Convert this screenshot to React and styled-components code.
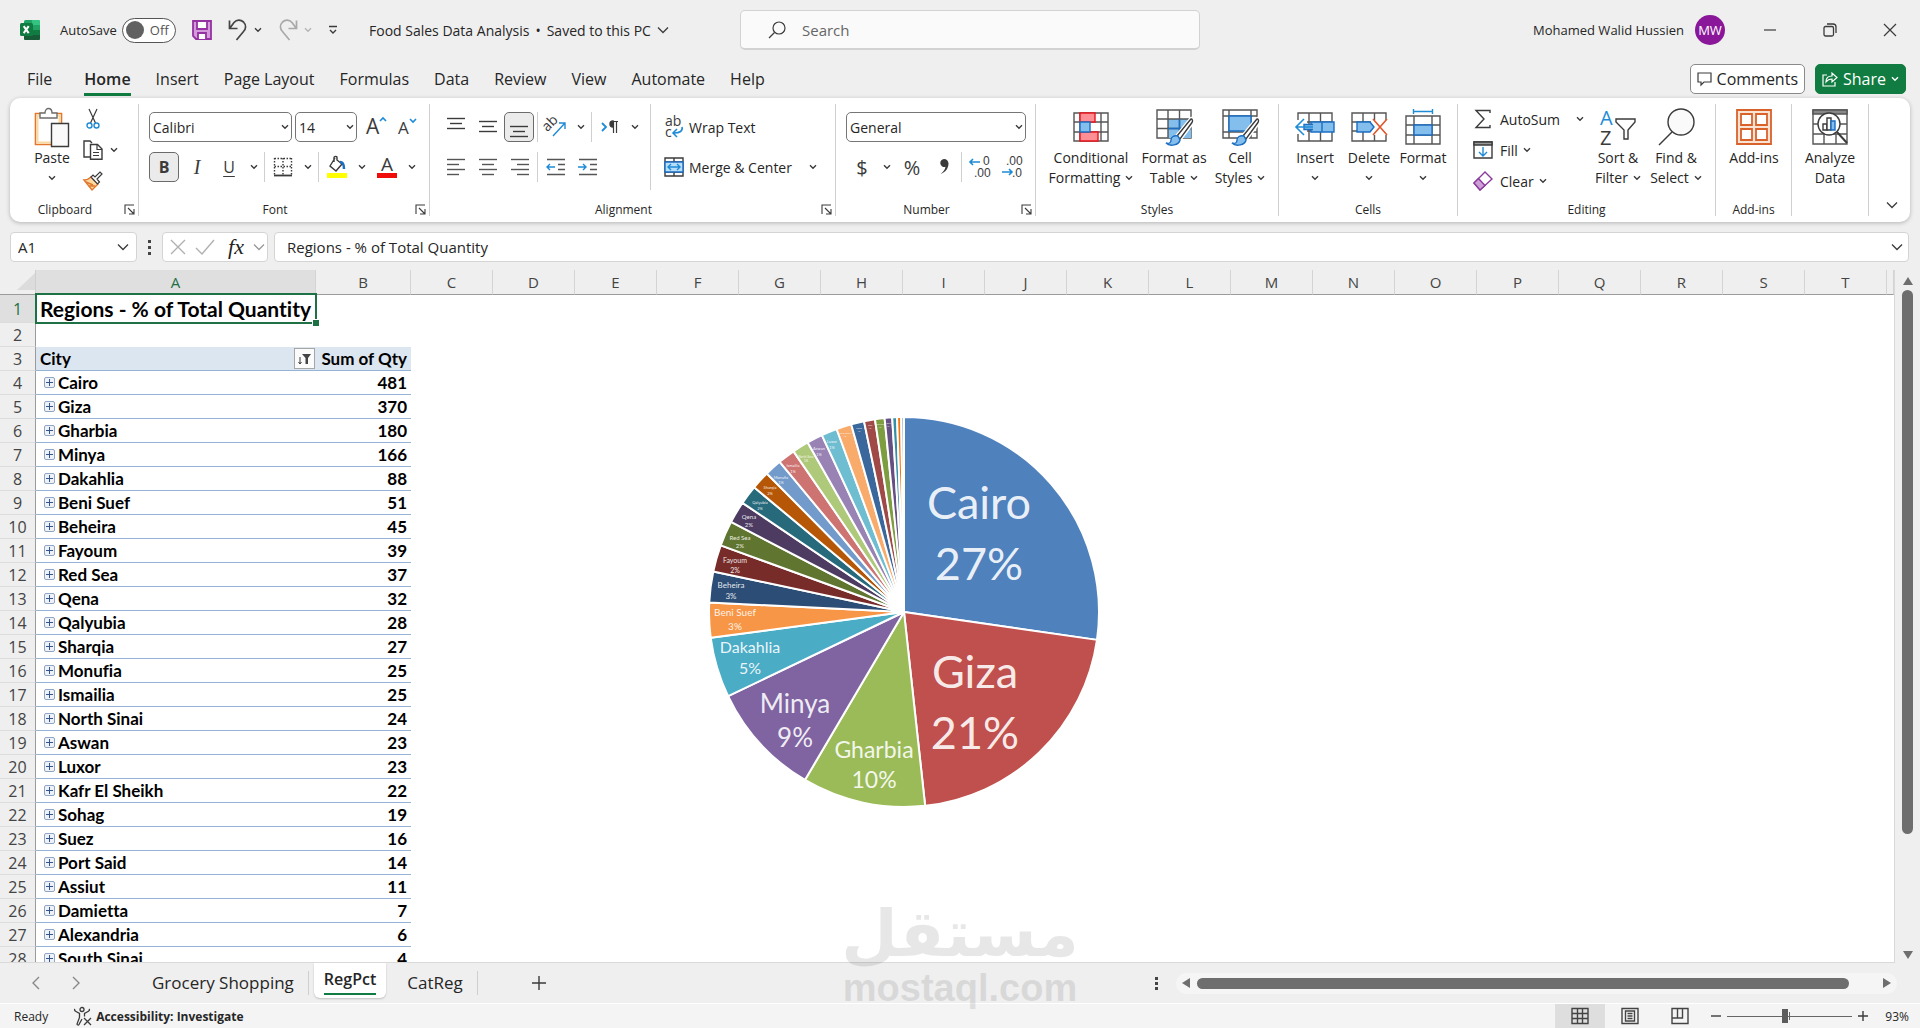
import React, { useState } from 'react'
import styled, { createGlobalStyle, css } from 'styled-components'

const cities = [
  { name: 'Cairo', qty: 481, color: '#4f81bd', label: { x: 271, y: 103, gap: 61, size: 45 } },
  { name: 'Giza', qty: 370, color: '#c0504d', label: { x: 267, y: 272, gap: 61, size: 45 } },
  { name: 'Gharbia', qty: 180, color: '#9bbb59', label: { x: 166, y: 342, gap: 30, size: 23 } },
  { name: 'Minya', qty: 166, color: '#8064a2', label: { x: 87, y: 297, gap: 34, size: 26 } },
  { name: 'Dakahlia', qty: 88, color: '#4bacc6', label: { x: 42, y: 237, gap: 21, size: 16 } },
  { name: 'Beni Suef', qty: 51, color: '#f79646', label: { x: 27, y: 200, gap: 14, size: 10 } },
  { name: 'Beheira', qty: 45, color: '#2c4d75', label: { x: 23, y: 172, gap: 11, size: 8 } },
  { name: 'Fayoum', qty: 39, color: '#772c2a', label: { x: 27, y: 147, gap: 10, size: 7 } },
  { name: 'Red Sea', qty: 37, color: '#5f7530', label: { x: 32, y: 124, gap: 8, size: 6 } },
  { name: 'Qena', qty: 32, color: '#4d3b62', label: { x: 41, y: 103, gap: 8, size: 6 } },
  { name: 'Qalyubia', qty: 28, color: '#276a7c', label: { x: 52, y: 88, gap: 6, size: 4 } },
  { name: 'Sharqia', qty: 27, color: '#b65708', label: { x: 62, y: 73, gap: 6, size: 4 } },
  { name: 'Monufia', qty: 25, color: '#729aca', label: { x: 73, y: 63, gap: 5, size: 4 } },
  { name: 'Ismailia', qty: 25, color: '#cd7371', label: { x: 85, y: 51, gap: 6, size: 4 } },
  { name: 'North Sinai', qty: 24, color: '#afc97a', label: { x: 98, y: 42, gap: 4, size: 3 } },
  { name: 'Aswan', qty: 23, color: '#9983b5', label: { x: 111, y: 34, gap: 6, size: 4 } },
  { name: 'Luxor', qty: 23, color: '#6fbdd1', label: { x: 124, y: 27, gap: 6, size: 4 } },
  { name: 'Kafr El Sheikh', qty: 22, color: '#f9ab6b', label: { x: 137, y: 18, gap: 3, size: 2 } },
  { name: 'Sohag', qty: 19, color: '#3a679c', label: { x: 151, y: 13, gap: 3, size: 2 } },
  { name: 'Suez', qty: 16, color: '#9f4a47', label: { x: 162, y: 10, gap: 3, size: 2 } },
  { name: 'Port Said', qty: 14, color: '#7e9d40', label: { x: 172, y: 9, gap: 3, size: 2 } },
  { name: 'Assiut', qty: 11, color: '#664f83', label: { x: 180, y: 8, gap: 3, size: 2 } },
  { name: 'Damietta', qty: 7, color: '#358ea6' },
  { name: 'Alexandria', qty: 6, color: '#f3730a' },
  { name: 'South Sinai', qty: 4, color: '#95b3d7' },
]

const menu = ['File', 'Home', 'Insert', 'Page Layout', 'Formulas', 'Data', 'Review', 'View', 'Automate', 'Help']
const columns = 'ABCDEFGHIJKLMNOPQRST'.split('')

/* ---------- icons ---------- */

const ink = '#3b3b3b'
const blue = '#1e8bd6'

const Svg = ({ w = 20, h = 20, children, ...rest }) => (
  <svg width={w} height={h} viewBox={`0 0 ${w} ${h}`} fill="none" stroke={ink} strokeWidth="1.4" aria-hidden="true" {...rest}>
    {children}
  </svg>
)

const Chevron = ({ color = ink }) => (
  <Svg w={8} h={6} stroke={color}><path d="M1 1.2 4 4.2 7 1.2" /></Svg>
)

const WideChevron = ({ color = ink }) => (
  <Svg w={12} h={8} stroke={color} strokeWidth="1.3"><path d="M1 1.5 6 6.5 11 1.5" /></Svg>
)

const ExcelLogo = () => (
  <Svg stroke="none">
    <rect x="4" y="0" width="16" height="20" rx="1.5" fill="#21a366" />
    <path d="M12 0h6.5a1.5 1.5 0 0 1 1.5 1.5V5h-8z" fill="#33c481" />
    <rect x="4" y="5" width="8" height="5" fill="#107c41" />
    <rect x="12" y="10" width="8" height="5" fill="#107c41" />
    <path d="M4 15h16v3.5a1.5 1.5 0 0 1-1.5 1.5h-13A1.5 1.5 0 0 1 4 18.500z" fill="#185c37" />
    <rect x="0" y="3" width="13" height="13" rx="1.5" fill="#107c41" />
    <path d="m3.700 6.200 5 7m0-7-5 7" stroke="#fff" strokeWidth="2" />
  </Svg>
)

const SaveIcon = () => (
  <Svg stroke="#9332a0" strokeWidth="1.800">
    <path d="M1 1h18v18H4l-3-3z" fill="#d49adc" />
    <path d="M5 1h10v8H5z" fill="#fff" />
    <path d="M6 19v-6h8v6" fill="#fff" />
  </Svg>
)

const UndoIcon = ({ flip, color }) => (
  <Svg w={20} h={22} stroke={color} strokeWidth="1.700">
    <g transform={flip ? 'translate(20 0) scale(-1 1)' : undefined}>
      <path d="M1.500 1.500v8h8M2 9l4-5.500C9 0 13 .8 15.500 3c3 3 2.500 7 0 9.500L8.500 21" />
    </g>
  </Svg>
)

const MagnifierIcon = () => (
  <Svg w={18} h={18} strokeWidth="1.200"><circle cx="11" cy="7" r="6" /><path d="M6.500 11.500 1 17" /></Svg>
)

const PasteIcon = () => (
  <Svg w={36} h={40}>
    <path d="M1.500 6.500h26v31h-26z" stroke="#e0772c" strokeWidth="1.600" fill="#fff" />
    <path d="M3.500 8.500h22v27h-22z" stroke="#fbd9a0" strokeWidth="2" />
    <path d="M6 11V6h5c0-6 7-6 7 0h5v5z" fill="#fff" stroke="#6e6e6e" />
    <path d="M17.500 16.500h17v23h-17z" fill="#fafafa" />
  </Svg>
)

const CutIcon = () => (
  <Svg w={14} h={20}>
    <path d="M3 0 9.500 14M11 0 4.500 14" strokeWidth="1.200" />
    <circle cx="3.500" cy="16.500" r="2.500" stroke={blue} />
    <circle cx="10.500" cy="16.500" r="2.500" stroke={blue} />
  </Svg>
)

const CopyIcon = () => (
  <Svg>
    <path d="M7 17H1V1h6l2 2" /><path d="M7.500 4.500h7l4.500 4.500v10.300H7.500z" fill="#fff" />
    <path d="M14 4.500V9.500h5M10 12.500h6M10 15.500h6" strokeWidth="1.200" />
  </Svg>
)

const BrushIcon = () => (
  <Svg>
    <path d="m1 9 8 10 6-6-7-7c-2 2-4 3-7 3z" fill="#fbd9a0" stroke="#e0772c" />
    <path d="m3 11 7 3M6 15l6 0" stroke="#e0772c" />
    <path d="m8 6 6.500 7 2-2-2.500-3L19 3l-2-2-5 5-2-2z" fill="#fff" strokeWidth="1.200" />
  </Svg>
)

const LauncherIcon = () => (
  <Svg w={11} h={11} strokeWidth="1.100"><path d="M1 10V1h9M4 4l6 6M10 5v5H5" /></Svg>
)

const GlyphText = styled.text`
  font-family: ${(p) => (p.$narrow ? "'Liberation Sans'" : "'Open Sans'")}, sans-serif;
  fill: ${(p) => p.$color || ink};
  stroke: none;
`

const GrowFontIcon = ({ shrink }) => (
  <Svg w={22} h={22}>
    <GlyphText x="1" y="18" fontSize={shrink ? 17 : 21}>A</GlyphText>
    <path d={shrink ? 'M13 3l3 3 3-3' : 'M15 5l3-3 3 3'} stroke={blue} strokeWidth="1.600" />
  </Svg>
)

const BordersIcon = () => (
  <Svg>
    <path d="M1.500 1.500h17M1.500 9.500h17M1.500 1v17M10 1v17M18.500 1v17" strokeDasharray="1.500 1.500" />
    <path d="M1 18.500h18" strokeWidth="1.800" />
  </Svg>
)

const FillColorIcon = () => (
  <Svg w={20} h={22}>
    <path d="M8 2 3 10l6 5 6-7-5-4V1.500C10 0 7 0 7 1.500V6" fill="#fff" />
    <path d="M13 6c3 0 4 3 4 7" stroke="#1b6ec2" strokeWidth="2.500" />
    <path d="M0 17h20v5H0z" fill="#ff0" stroke="none" />
  </Svg>
)

const FontColorIcon = () => (
  <Svg w={20} h={22}>
    <GlyphText x="4" y="15" fontSize="19">A</GlyphText>
    <path d="M0 17h20v5H0z" fill="#f10c0c" stroke="none" />
  </Svg>
)

const lines = {
  top: [[1, 1], [4, 6], [1, 11]],
  middle: [[1, 4], [4, 9], [1, 14]],
  bottom: [[1, 9], [4, 14], [1, 19]],
}

const VAlignIcon = ({ kind }) => (
  <Svg>
    {lines[kind].map(([x, y]) => <path key={y} d={`M${x} ${y}.5H${20 - x}`} />)}
  </Svg>
)

const HAlignIcon = ({ kind }) => (
  <Svg stroke="#555">
    {[2, 7, 12, 17].map((y, i) => {
      const len = i % 2 ? 12 : 18
      const x = kind === 'left' ? 1 : kind === 'right' ? 19 - len : 10 - len / 2
      return <path key={y} d={`M${x} ${y}.5h${len}`} />
    })}
  </Svg>
)

const IndentIcon = ({ right }) => (
  <Svg stroke="#555">
    <path d="M1 2.500h18M12 7.500h7M12 12.500h7M1 17.500h18" />
    <path d={right ? 'M0 10h8M5 7l3 3-3 3' : 'M9 10H1M4 7l-3 3 3 3'} stroke={blue} />
  </Svg>
)

const OrientationIcon = () => (
  <Svg w={22} h={22}>
    <g transform="rotate(-45 8 12)"><GlyphText x="1" y="11" fontSize="14">ab</GlyphText></g>
    <path d="M8 20 20 7M14 7h6v6" stroke={blue} />
  </Svg>
)

const DirectionIcon = () => (
  <Svg w={18} h={14}>
    <path d="m1 3 4 4-4 4" stroke={blue} strokeWidth="1.800" />
    <path d="M11 1.500h6M12.500 1v12M15.500 1v12" strokeWidth="1.200" />
    <path d="M12 1a3 3 0 0 0 0 6z" fill={ink} />
  </Svg>
)

const WrapIcon = () => (
  <Svg w={20} h={22}>
    <GlyphText x="1" y="10" fontSize="14">ab</GlyphText>
    <GlyphText x="1" y="21" fontSize="14">c</GlyphText>
    <path d="M18 11c1 4-2 6-8 6M13 13l-4 4 4 4" stroke={blue} strokeWidth="1.600" />
  </Svg>
)

const MergeIcon = () => (
  <Svg>
    <path d="M1 1h18v18H1zM1 5h18M1 15h18M10 1v4M10 15v4" />
    <path d="M1 5h18v10H1z" fill="#b9defa" stroke="#1b6ec2" />
    <path d="M4 10h12M7 7l-3 3 3 3M13 7l3 3-3 3" stroke={blue} />
  </Svg>
)

const DecimalIcon = ({ less }) => (
  <Svg w={22} h={22}>
    <GlyphText $narrow x={less ? 5 : 14} y="9" fontSize="12">{less ? '.00' : '0'}</GlyphText>
    <GlyphText $narrow x={less ? 11 : 5} y="21" fontSize="12">{less ? '.0' : '.00'}</GlyphText>
    <path d={less ? 'M1 16h10M8 13l3 3-3 3' : 'M11 6H1M4 3 1 6l3 3'} stroke={blue} strokeWidth="1.600" />
  </Svg>
)

const CondFormatIcon = () => (
  <Svg w={36} h={30}>
    <path d="M1 1h34v28H1zM1 10h34M1 20h34M7 1v28M28 1v28" stroke="#555" fill="#fff" />
    <path d="M7 1h15v9H7zM7 20h18v9H7z" fill="#ff8f95" stroke="#e8151b" />
    <path d="M7 10h10v10H7z" fill="#83beec" stroke="#1b6ec2" />
  </Svg>
)

const brushOver = (
  <>
    <path d="m37 10-14 17 3 3L39 13c1-2-1-4-2-3z" fill="#fff" stroke="#fff" strokeWidth="4" />
    <path d="M36.500 10.500 23 27l3 3 12-16.500c1.500-2-.5-4.500-1.500-3z" fill="#fff" />
    <path d="M24 27c-4-1-7 1-7 4s-2 4-5 3c4 4 13 2 14-3z" fill="#83beec" stroke="#1b6ec2" />
  </>
)

const FormatTableIcon = () => (
  <Svg w={40} h={36}>
    <path d="M3 1h34v28H3z" fill="#fff" stroke="#555" />
    <path d="M14 10h23v19H14z" fill="#83beec" stroke="none" />
    <path d="M3 10h34M3 19.500h34M14 1v28M25.500 1v28" stroke="#555" />
    <path d="M14 19.500h23M25.500 10v19" stroke="#1b6ec2" />
    {brushOver}
  </Svg>
)

const CellStylesIcon = () => (
  <Svg w={40} h={36}>
    <path d="M3 1h34v28H3zM3 7h34M3 23h34M9 1v28M31 1v28" fill="#fff" stroke="#555" />
    <path d="M9 7h22v15H9z" fill="#83beec" stroke="#1b6ec2" />
    {brushOver}
  </Svg>
)

const InsertCellsIcon = () => (
  <Svg w={40} h={32}>
    <path d="M3 2h34v28H3zM3 11h34M3 20h34M14 2v28M25.500 2v28" stroke="#555" />
    <path d="M16 11h23v10H16z" fill="#83beec" stroke="#1b6ec2" /><path d="M27 11v10" stroke="#1b6ec2" />
    <path d="M1 9h11v14H1z" fill="#fff" stroke="none" />
    <path d="M18 13.500H9v5h9" fill="#83beec" stroke="#1b6ec2" />
    <path d="M18 16H1M9 8l-8 8 8 8" stroke={blue} strokeWidth="1.600" />
  </Svg>
)

const DeleteCellsIcon = () => (
  <Svg w={40} h={32}>
    <path d="M3 2h34v28H3zM3 11h34M3 20h34M14 2v28M25.500 2v28" stroke="#555" />
    <path d="M22 9h18v15H22z" fill="#fff" stroke="none" />
    <path d="M8 11h13l4 5-4 5H8z" fill="#83beec" stroke="#1b6ec2" />
    <path d="m24 8 14 16M38 8 24 24" stroke="#e0572c" strokeWidth="1.600" />
  </Svg>
)

const FormatCellsIcon = () => (
  <Svg w={36} h={36}>
    <path d="M9 2.500h18M8.500 0v5M27.500 0v5" stroke={blue} />
    <path d="M1 7h34v28H1zM1 16h34M1 26h34M9 7v28M27 7v28" stroke="#555" />
    <path d="M9 16h18v10H9z" fill="#83beec" stroke="#1b6ec2" />
  </Svg>
)

const SigmaIcon = () => (
  <Svg><path d="M17 4V1.500H3L11 10l-8 8.500h14V16" /></Svg>
)

const FillDownIcon = () => (
  <Svg>
    <path d="M1 2h18v16H1z" /><path d="M1 2h18v3H1z" fill="#999" />
    <path d="M10 7v9M6 12l4 4 4-4" stroke={blue} />
  </Svg>
)

const EraserIcon = () => (
  <Svg stroke="#8b3a9e">
    <path d="M12 1 1 12l6 7L19 8z" fill="#fff" /><path d="M5.500 7.500 1 12l6 7 5-4.500z" fill="#cda0d6" />
  </Svg>
)

const SortFilterIcon = () => (
  <Svg w={38} h={36}>
    <GlyphText x="1" y="16" fontSize="20" $color={blue}>A</GlyphText>
    <GlyphText x="1" y="36" fontSize="20">Z</GlyphText>
    <path d="M17 10h19v3l-7 8v9h-4v-9l-8-8z" />
  </Svg>
)

const FindIcon = () => (
  <Svg w={38} h={38}><circle cx="24" cy="14" r="13" fill="#fafafa" /><path d="M15 24 2 37" /></Svg>
)

const AddInsIcon = () => (
  <Svg w={36} h={36} stroke="#d9622b" strokeWidth="1.800">
    <path d="M1 1h34v34H1z" fill="#fbe3d3" />
    <path d="M5 5h11v11H5zM20 5h11v11H20zM5 20h11v11H5zM20 20h11v11H20z" fill="#fff" />
  </Svg>
)

const AnalyzeIcon = () => (
  <Svg w={36} h={36}>
    <path d="M1 1h34v34H1zM1 15h34M1 25h34M12 25v10M24 25v10" stroke="#555" />
    <path d="M1 1h34v4H1z" fill="#888" stroke="#555" />
    <circle cx="17" cy="15" r="11" fill="#fff" />
    <path d="m25 23 10 11" strokeWidth="2" />
    <path d="M11 15h4v6h-4z" fill="#fff" /><path d="M15 9h4v12h-4z" fill="#fff" />
    <path d="M19 12h4v9h-4z" fill="#83beec" stroke="#1b6ec2" />
  </Svg>
)

const CommentIcon = () => (
  <Svg w={15} h={14} strokeWidth="1.200"><path d="M1 1h13v9H7l-3 3v-3H1z" /></Svg>
)

const ShareIcon = () => (
  <Svg w={16} h={16} stroke="#fff" strokeWidth="1.200">
    <path d="M5 4H1v11h12v-4" /><path d="M4 11c0-4 2-6 6-6V2l5 4.500-5 4.500V8c-3 0-4.500 1-6 3z" />
  </Svg>
)

const AccessibilityIcon = () => (
  <Svg strokeWidth="1.300">
    <circle cx="9" cy="3.500" r="2" />
    <path d="M2 3c-1 1 0 2 1 2.500l3.500 2v4L4 18c0 1 1.500 1.500 2 .5L9 13M16 3c1 1 0 2-1 2.500l-3.500 2v3" />
    <path d="m11 12 7 7M18 12l-7 7" />
  </Svg>
)

const ViewIcon = ({ kind }) => (
  <Svg w={18} h={18} stroke="#444">
    <path d="M1 1.500h16v15H1z" />
    {kind === 'Normal' && <path d="M1 6.500h16M1 11.500h16M6.500 1v16M11.500 1v16" />}
    {kind === 'Page Layout' && <path d="M4.500 4h9v10h-9zM6.500 6.500h5M6.500 9h5M6.500 11.500h5" />}
    {kind === 'Page Break Preview' && <path d="M1 11h10.500V1M6.500 1v10" />}
  </Svg>
)

const SortedFilterIcon = () => (
  <Svg w={14} h={12} strokeWidth="1"><path d="M2 4v7M.5 9 2 11l1.500-2" /><path d="M4 1h9L10 5v6H7.500V5z" fill="#444" stroke="none" /></Svg>
)

const Triangle = ({ dir }) => (
  <Svg w={10} h={10} stroke="none" fill="#6e6e6e">
    <path d={{ left: 'M9 0v10L1 5z', right: 'M1 0v10l8-5z', up: 'M0 9h10L5 1z', down: 'M0 1h10L5 9z' }[dir]} />
  </Svg>
)

/* ---------- chart ---------- */

function PieChart() {
  const c = 196
  const r = 195
  const total = cities.reduce((sum, d) => sum + d.qty, 0)
  const point = (v) => {
    const a = (v / total) * Math.PI * 2
    return `${c + r * Math.sin(a)} ${c - r * Math.cos(a)}`
  }
  let start = 0
  const slices = cities.map((d) => {
    const from = start
    start += d.qty
    return { ...d, path: `M${c} ${c}L${point(from)}A${r} ${r} 0 0 1 ${point(start)}Z` }
  })

  return (
    <Chart viewBox="0 0 392 392" role="img" aria-label="Regions - % of Total Quantity">
      {slices.map((s) => <path key={s.name} d={s.path} fill={s.color} />)}
      {slices.filter((s) => s.label).map(({ name, qty, label }) => (
        <ChartLabel key={name} fontSize={label.size}>
          <tspan x={label.x} y={label.y}>{name}</tspan>
          <tspan x={label.x} y={label.y + label.gap}>{Math.round((qty / total) * 100)}%</tspan>
        </ChartLabel>
      ))}
    </Chart>
  )
}

/* ---------- ribbon pieces ---------- */

const Big = ({ icon, label, sub, drop, width }) => (
  <BigButton $width={width}>
    <BigIcon>{icon}</BigIcon>
    <span>{label}</span>
    <SecondLine>{sub}{drop && <Chevron />}</SecondLine>
  </BigButton>
)

const Group = ({ title, width, launcher, children }) => (
  <GroupBox $width={width}>
    <GroupBody>{children}</GroupBody>
    <GroupFooter $launcher={launcher}>
      {title}
      {launcher && <Launcher aria-label={`${title} settings`}><LauncherIcon /></Launcher>}
    </GroupFooter>
  </GroupBox>
)

const Combo = ({ label, value, width }) => (
  <ComboBox $width={width}>
    <select aria-label={label} defaultValue={value}><option>{value}</option></select>
    <Chevron />
  </ComboBox>
)

const DropButton = ({ label }) => <Drop aria-label={label}><Chevron /></Drop>

function App() {
  const [zoom, setZoom] = useState(93)

  return (
    <Window>
      <GlobalStyle />
      <TitleBar>
        <QuickAccess>
          <ExcelLogo />
          <Toggle>
            AutoSave
            <input type="checkbox" role="switch" />
            <Track><Knob />Off</Track>
          </Toggle>
          <PlainButton aria-label="Save"><SaveIcon /></PlainButton>
          <PlainButton aria-label="Undo"><UndoIcon color="#444" /><Chevron /></PlainButton>
          <PlainButton aria-label="Redo"><UndoIcon flip color="#a9a9a9" /><Chevron color="#b5b5b5" /></PlainButton>
          <PlainButton aria-label="Customize Quick Access Toolbar">
            <Svg w={10} h={10}><path d="M1 1.500h8M2 5l3 3 3-3" /></Svg>
          </PlainButton>
        </QuickAccess>
        <FileName>
          <span>Food Sales Data Analysis</span>
          <span>•</span>
          <span>Saved to this PC</span>
          <WideChevron />
        </FileName>
        <SearchBox>
          <MagnifierIcon />
          <input type="search" aria-label="Search" placeholder="Search" />
        </SearchBox>
        <Account>
          Mohamed Walid Hussien
          <Avatar>MW</Avatar>
        </Account>
        <WindowButton aria-label="Minimize"><Svg w={14} h={14} strokeWidth="1.200"><path d="M1 7h12" /></Svg></WindowButton>
        <WindowButton aria-label="Restore">
          <Svg w={14} h={14} strokeWidth="1.300"><rect x="1" y="3.500" width="9.500" height="9.500" rx="1.500" /><path d="M4 1h6a3 3 0 0 1 3 3v6" /></Svg>
        </WindowButton>
        <WindowButton aria-label="Close"><Svg w={14} h={14} strokeWidth="1.200"><path d="m1 1 12 12M13 1 1 13" /></Svg></WindowButton>
      </TitleBar>

      <MenuBar>
        {menu.map((m) => <MenuTab key={m} $active={m === 'Home'}><span>{m}</span></MenuTab>)}
        <Actions>
          <ActionButton><CommentIcon />Comments</ActionButton>
          <ActionButton $primary><ShareIcon />Share <Chevron color="#fff" /></ActionButton>
        </Actions>
      </MenuBar>

      <Ribbon>
        <Group title="Clipboard" width={129} launcher>
          <Stretch $left={17}>
            <Big icon={<PasteIcon />} label="Paste" drop width={50} />
            <SideList $indent={3}>
              <SideButton aria-label="Cut"><IconSlot><CutIcon /></IconSlot></SideButton>
              <SideButton aria-label="Copy"><IconSlot><CopyIcon /></IconSlot><Chevron /></SideButton>
              <SideButton aria-label="Format Painter"><IconSlot><BrushIcon /></IconSlot></SideButton>
            </SideList>
          </Stretch>
        </Group>

        <Group title="Font" width={291} launcher>
          <ToolRows>
            <ToolRow>
              <Combo label="Font" value="Calibri" width={143} />
              <Combo label="Font size" value="14" width={62} />
              <Tool aria-label="Increase font size"><GrowFontIcon /></Tool>
              <Tool aria-label="Decrease font size"><GrowFontIcon shrink /></Tool>
            </ToolRow>
            <ToolRow>
              <Tool $active $letter="bold">B</Tool>
              <Tool $letter="italic">I</Tool>
              <Tool $letter="underline">U</Tool>
              <DropButton label="Underline styles" />
              <Sep />
              <Tool aria-label="Borders"><BordersIcon /></Tool>
              <DropButton label="More borders" />
              <Sep />
              <Tool aria-label="Fill color"><FillColorIcon /></Tool>
              <DropButton label="More fill colors" />
              <Tool aria-label="Font color"><FontColorIcon /></Tool>
              <DropButton label="More font colors" />
            </ToolRow>
          </ToolRows>
        </Group>

        <Group title="Alignment" width={406} launcher>
          <ToolRows $divided>
            <ToolRow>
              <Tool aria-label="Top align"><VAlignIcon kind="top" /></Tool>
              <Tool aria-label="Middle align"><VAlignIcon kind="middle" /></Tool>
              <Tool aria-label="Bottom align" $active><VAlignIcon kind="bottom" /></Tool>
              <Sep />
              <Tool aria-label="Orientation"><OrientationIcon /></Tool>
              <DropButton label="More orientations" />
              <Sep />
              <Tool aria-label="Text direction"><DirectionIcon /></Tool>
              <DropButton label="More text directions" />
            </ToolRow>
            <ToolRow>
              <Tool aria-label="Align left"><HAlignIcon kind="left" /></Tool>
              <Tool aria-label="Center"><HAlignIcon kind="center" /></Tool>
              <Tool aria-label="Align right"><HAlignIcon kind="right" /></Tool>
              <Sep />
              <Tool aria-label="Decrease indent"><IndentIcon /></Tool>
              <Tool aria-label="Increase indent"><IndentIcon right /></Tool>
            </ToolRow>
          </ToolRows>
          <ToolRows>
            <ToolRow><TextTool><WrapIcon />Wrap Text</TextTool></ToolRow>
            <ToolRow>
              <TextTool><MergeIcon />Merge &amp; Center</TextTool>
              <DropButton label="More merge options" />
            </ToolRow>
          </ToolRows>
        </Group>

        <Group title="Number" width={200} launcher>
          <ToolRows>
            <ToolRow><Combo label="Number format" value="General" width={180} /></ToolRow>
            <ToolRow>
              <Tool $letter="sign">$</Tool>
              <DropButton label="More currencies" />
              <Tool $letter="sign">%</Tool>
              <Tool aria-label="Comma style">
                <Svg w={12} h={18}><path d="M6 1a4 4 0 1 0 1.500 7.800C7 12 5 14 2.500 16c5-1.500 8-6 8-10.500C10.500 3 8.500 1 6 1z" fill={ink} stroke="none" /></Svg>
              </Tool>
              <Sep />
              <Tool aria-label="Increase decimal"><DecimalIcon /></Tool>
              <Tool aria-label="Decrease decimal"><DecimalIcon less /></Tool>
            </ToolRow>
          </ToolRows>
        </Group>

        <Group title="Styles" width={243}>
          <Stretch $left={5}>
            <Big icon={<CondFormatIcon />} label="Conditional" sub="Formatting" drop width={100} />
            <Big icon={<FormatTableIcon />} label="Format as" sub="Table" drop width={66} />
            <Big icon={<CellStylesIcon />} label="Cell" sub="Styles" drop width={66} />
          </Stretch>
        </Group>

        <Group title="Cells" width={179}>
          <Stretch $left={9}>
            <Big icon={<InsertCellsIcon />} label="Insert" drop width={54} />
            <Big icon={<DeleteCellsIcon />} label="Delete" drop width={54} />
            <Big icon={<FormatCellsIcon />} label="Format" drop width={54} />
          </Stretch>
        </Group>

        <Group title="Editing" width={258}>
          <Stretch $left={12}>
            <SideList $width={119}>
              <SideButton><IconSlot><SigmaIcon /></IconSlot>AutoSum<Push /><Chevron /></SideButton>
              <SideButton><IconSlot><FillDownIcon /></IconSlot>Fill<Chevron /></SideButton>
              <SideButton><IconSlot><EraserIcon /></IconSlot>Clear<Chevron /></SideButton>
            </SideList>
            <Big icon={<SortFilterIcon />} label="Sort &amp;" sub="Filter" drop width={58} />
            <Big icon={<FindIcon />} label="Find &amp;" sub="Select" drop width={58} />
          </Stretch>
        </Group>

        <Group title="Add-ins" width={76}>
          <Stretch><Big icon={<AddInsIcon />} label="Add-ins" width={76} /></Stretch>
        </Group>

        <Group width={77}>
          <Stretch><Big icon={<AnalyzeIcon />} label="Analyze" sub="Data" width={76} /></Stretch>
        </Group>

        <Collapse aria-label="Collapse ribbon"><WideChevron /></Collapse>
      </Ribbon>

      <FormulaBar>
        <NameBox>
          <input aria-label="Name box" defaultValue="A1" />
          <WideChevron />
        </NameBox>
        <Dots><i /><i /><i /></Dots>
        <FxBox>
          <Svg w={16} h={16} stroke="#b0b0b0"><path d="m1 1 14 14M15 1 1 15" /></Svg>
          <Svg w={20} h={16} stroke="#b0b0b0"><path d="m1 9 6 6L19 1" /></Svg>
          <Fx>fx</Fx>
          <WideChevron color="#999" />
        </FxBox>
        <FormulaBox>
          <input aria-label="Formula bar" defaultValue="Regions - % of Total Quantity" />
          <WideChevron />
        </FormulaBox>
      </FormulaBar>

      <Workspace>
        <Sheet>
          <Grid>
            <colgroup>
              <Col $width={36} />
              <Col $width={280} />
              <Col $width={95} />
              {columns.slice(2).map((c) => <Col key={c} $width={82} />)}
              <col />
            </colgroup>
            <thead>
              <tr>
                <Corner><Svg w={18} h={18} stroke="none"><path d="M18 0v17H0z" fill="#dcdcdc" /></Svg></Corner>
                {columns.map((c) => <ColHead key={c} scope="col" $active={c === 'A'}>{c}</ColHead>)}
                <ColHead as="td" />
              </tr>
            </thead>
            <tbody>
              <Row $title>
                <RowHead scope="row" $active>1</RowHead>
                <Cell $selected>Regions - % of Total Quantity</Cell>
              </Row>
              <Row><RowHead scope="row">2</RowHead></Row>
              <Row>
                <RowHead scope="row">3</RowHead>
                <Cell $head>
                  <CellSplit>City<FilterButton aria-label="Filter City"><SortedFilterIcon /></FilterButton></CellSplit>
                </Cell>
                <Cell $head $right>Sum of Qty</Cell>
              </Row>
              {cities.map((d, i) => (
                <Row key={d.name}>
                  <RowHead scope="row">{i + 4}</RowHead>
                  <Cell $lined>
                    <CityName>
                      <Expand aria-label={`Expand ${d.name}`}><Svg w={7} h={7} stroke="#33548c" strokeWidth="1"><path d="M3.500 0v7M0 3.500h7" /></Svg></Expand>
                      {d.name}
                    </CityName>
                  </Cell>
                  <Cell $lined $right>{d.qty}</Cell>
                </Row>
              ))}
            </tbody>
          </Grid>
          <PieChart />
        </Sheet>
        <VScroll>
          <PlainButton aria-label="Scroll up"><Triangle dir="up" /></PlainButton>
          <VRail><VThumb /></VRail>
          <PlainButton aria-label="Scroll down"><Triangle dir="down" /></PlainButton>
        </VScroll>
      </Workspace>

      <SheetBar>
        <TabNav>
          <PlainButton aria-label="Previous sheet"><Svg w={8} h={14} stroke="#888"><path d="M7 1 1 7l6 6" /></Svg></PlainButton>
          <PlainButton aria-label="Next sheet"><Svg w={8} h={14} stroke="#888"><path d="m1 1 6 6-6 6" /></Svg></PlainButton>
        </TabNav>
        <SheetTab>Grocery Shopping</SheetTab>
        <SheetTab $active><span>RegPct</span></SheetTab>
        <SheetTab>CatReg</SheetTab>
        <AddSheet aria-label="New sheet"><Svg w={14} h={14}><path d="M7 0v14M0 7h14" /></Svg></AddSheet>
        <Push />
        <Dots $small><i /><i /><i /></Dots>
        <HScroll>
          <PlainButton aria-label="Scroll left"><Triangle dir="left" /></PlainButton>
          <HRail><HThumb /></HRail>
          <PlainButton aria-label="Scroll right"><Triangle dir="right" /></PlainButton>
        </HScroll>
      </SheetBar>

      <StatusBar>
        Ready
        <Access><AccessibilityIcon />Accessibility: Investigate</Access>
        <Push />
        {['Normal', 'Page Layout', 'Page Break Preview'].map((v) => (
          <ViewButton key={v} aria-label={v} $active={v === 'Normal'}><ViewIcon kind={v} /></ViewButton>
        ))}
        <ZoomBox>
          <PlainButton aria-label="Zoom out"><Svg w={12} h={12}><path d="M1 6h10" /></Svg></PlainButton>
          <input
            type="range"
            aria-label="Zoom"
            min="0"
            max="200"
            value={zoom}
            onChange={(e) => setZoom(Number(e.target.value))}
          />
          <PlainButton aria-label="Zoom in"><Svg w={12} h={12}><path d="M6 1v10M1 6h10" /></Svg></PlainButton>
        </ZoomBox>
        <Percent>{zoom}%</Percent>
      </StatusBar>

      <Watermark>
        <Arabic lang="ar" dir="rtl">مستقل</Arabic>
        <span>mostaql.com</span>
      </Watermark>
    </Window>
  )
}

/* ---------- styles ---------- */

const GlobalStyle = createGlobalStyle`
  * {
    box-sizing: border-box;
  }

  body {
    margin: 0;
    font-family: 'Open Sans', sans-serif;
    font-size: 14px;
    color: #262626;
    overflow: hidden;
  }

  button, input, select {
    font: inherit;
    color: inherit;
    margin: 0;
    padding: 0;
    border: 0;
    background: none;
    outline: none;
  }

  svg {
    flex: none;
    overflow: visible;
  }
`

const Window = styled.div`
  position: relative;
  display: flex;
  flex-direction: column;
  height: 100vh;
  background: #efefef;
  white-space: nowrap;
`

const Push = styled.span`
  flex: 1;
`

const PlainButton = styled.button`
  display: flex;
  align-items: center;
  gap: 6px;
`

const TitleBar = styled.header`
  display: flex;
  align-items: center;
  height: 60px;
  padding-left: 20px;
`

const QuickAccess = styled.div`
  display: flex;
  align-items: center;
  gap: 16px;
  width: 349px;
`

const Toggle = styled.label`
  display: flex;
  align-items: center;
  gap: 5px;
  font-size: 13px;
  margin-left: 4px;

  input {
    position: absolute;
    opacity: 0;
  }
`

const Track = styled.span`
  display: flex;
  align-items: center;
  gap: 6px;
  width: 54px;
  height: 25px;
  padding-left: 3px;
  border: 1px solid #555;
  border-radius: 13px;
  background: #fff;
  color: #555;
`

const Knob = styled.i`
  width: 18px;
  height: 18px;
  border-radius: 50%;
  background: #616161;
`

const FileName = styled.button`
  display: flex;
  align-items: center;
  gap: 6px;
  width: 371px;
  font-size: 14px;
`

const SearchBox = styled.label`
  display: flex;
  align-items: center;
  gap: 16px;
  width: 460px;
  height: 40px;
  margin-right: auto;
  padding-left: 27px;
  border: 1px solid #d2d2d2;
  border-bottom-width: 2px;
  border-radius: 5px;
  background: #fafafa;

  input {
    flex: 1;
    font-size: 15px;
  }

  input::placeholder {
    color: #666;
  }
`

const Account = styled.div`
  display: flex;
  align-items: center;
  gap: 11px;
  margin-right: 15px;
  font-size: 13px;
`

const Avatar = styled.span`
  width: 30px;
  height: 30px;
  border-radius: 50%;
  background: #8a179a;
  color: #fff;
  line-height: 30px;
  text-align: center;
`

const WindowButton = styled.button`
  display: flex;
  align-items: center;
  justify-content: center;
  width: 60px;
  height: 30px;
`

const MenuBar = styled.nav`
  display: flex;
  align-items: flex-start;
  height: 38px;
  padding: 0 14px;
`

const MenuTab = styled.button`
  height: 36px;
  padding: 4px 12px 0 13px;
  font-size: 16px;
  font-weight: ${(p) => (p.$active ? 600 : 400)};

  &:first-child {
    margin-right: 7px;
  }

  span {
    display: block;
    height: 32px;
    line-height: 30px;
    border-bottom: 3px solid ${(p) => (p.$active ? '#107c41' : 'transparent')};
  }
`

const Actions = styled.div`
  display: flex;
  gap: 10px;
  margin-left: auto;
  padding-top: 4px;
`

const ActionButton = styled.button`
  display: flex;
  align-items: center;
  gap: 5px;
  height: 30px;
  padding: 0 6px;
  border: 1px solid ${(p) => (p.$primary ? '#107c41' : '#8a8a8a')};
  border-radius: 5px;
  background: ${(p) => (p.$primary ? '#107c41' : '#fff')};
  color: ${(p) => (p.$primary ? '#fff' : '#262626')};
  font-size: 16px;
`

const Ribbon = styled.section`
  display: flex;
  height: 124px;
  margin: 0 10px;
  padding: 6px 0;
  border-radius: 10px;
  background: #fff;
  box-shadow: 0 1px 4px rgba(0, 0, 0, 0.25);
`

const GroupBox = styled.div`
  display: flex;
  flex-direction: column;
  flex: none;
  width: ${(p) => p.$width}px;
  border-right: 1px solid #cfcfcf;
`

const GroupBody = styled.div`
  display: flex;
  flex: 1;
`

const GroupFooter = styled.div`
  position: relative;
  height: 12px;
  padding-right: ${(p) => (p.$launcher ? 18 : 0)}px;
  line-height: 12px;
  font-size: 12px;
  text-align: center;
`

const Launcher = styled.button`
  position: absolute;
  right: 3px;
  top: 0;
  line-height: 0;
`

const Stretch = styled.div`
  display: flex;
  padding-left: ${(p) => p.$left || 0}px;
`

const BigButton = styled.button`
  display: flex;
  flex-direction: column;
  align-items: center;
  width: ${(p) => p.$width}px;
  padding-top: 4px;
  line-height: 20px;
`

const BigIcon = styled.span`
  display: flex;
  align-items: center;
  height: 40px;
  padding-bottom: 3px;
`

const SecondLine = styled.span`
  display: flex;
  align-items: center;
  gap: 5px;
  height: 20px;
`

const SideList = styled.div`
  display: flex;
  flex-direction: column;
  gap: 1px;
  width: ${(p) => p.$width || 50}px;
  padding: 0 5px 0 ${(p) => p.$indent || 0}px;
`

const SideButton = styled.button`
  display: flex;
  align-items: center;
  gap: 5px;
  height: 30px;
`

const IconSlot = styled.span`
  display: flex;
  justify-content: center;
  width: 25px;
`

const ToolRows = styled.div`
  display: flex;
  flex-direction: column;
  gap: 10px;
  padding: 8px 0 0 10px;

  ${(p) => p.$divided && css`
    width: 221px;
    height: 86px;
    border-right: 1px solid #cfcfcf;
  `}
`

const ToolRow = styled.div`
  display: flex;
  align-items: center;
  height: 30px;
`

const letters = {
  bold: 'font-weight: 700; font-size: 16px;',
  italic: 'font-style: italic; font-family: "Liberation Serif", serif; font-size: 20px;',
  underline: 'text-decoration: underline; font-size: 16px; text-underline-offset: 3px;',
  sign: 'font-size: 20px;',
}

const Tool = styled.button`
  display: flex;
  align-items: center;
  justify-content: center;
  width: 32px;
  height: 30px;
  color: #3b3b3b;
  ${(p) => p.$letter && letters[p.$letter]}

  ${(p) => p.$active && css`
    width: 30px;
    margin-right: 2px;
    border: 1px solid #6b6b6b;
    border-radius: 5px;
    background: #ebebeb;
  `}
`

const TextTool = styled.button`
  display: flex;
  align-items: center;
  gap: 5px;
  padding-left: 3px;
  margin-right: 12px;
`

const Drop = styled.button`
  display: flex;
  align-items: center;
  justify-content: center;
  width: 18px;
  height: 30px;
`

const Sep = styled.i`
  width: 1px;
  height: 30px;
  margin: 0 2px 0 1px;
  background: #cfcfcf;
`

const ComboBox = styled.label`
  position: relative;
  width: ${(p) => p.$width}px;
  height: 30px;
  margin-right: 3px;

  select {
    appearance: none;
    width: 100%;
    height: 100%;
    padding-left: 3px;
    border: 1px solid #767676;
    border-radius: 5px;
    background: #fff;
  }

  svg {
    position: absolute;
    right: 3px;
    top: 12px;
    pointer-events: none;
  }
`

const Collapse = styled.button`
  display: flex;
  flex: 1;
  align-items: flex-end;
  justify-content: center;
  padding: 0 0 7px 4px;
`

const FormulaBar = styled.div`
  display: flex;
  align-items: center;
  height: 48px;
  padding: 2px 11px 0 10px;
  font-size: 15px;
`

const field = css`
  display: flex;
  align-items: center;
  height: 30px;
  border: 1px solid #d4d4d4;
  border-radius: 4px;
  background: #fff;
`

const NameBox = styled.label`
  ${field}
  width: 127px;
  padding: 0 7px;

  input {
    flex: 1;
    min-width: 0;
  }
`

const Dots = styled.span`
  display: flex;
  flex-direction: column;
  align-items: center;
  gap: ${(p) => (p.$small ? 2 : 3)}px;
  width: 25px;

  i {
    width: 3px;
    height: 3px;
    background: #444;
  }
`

const FxBox = styled.div`
  ${field}
  width: 106px;
  margin-right: 6px;
  padding: 0 2px 0 7px;
  justify-content: space-between;
`

const Fx = styled.span`
  padding-left: 4px;
  font: italic 400 22px 'Liberation Serif', serif;
  color: #222;
`

const FormulaBox = styled.label`
  ${field}
  flex: 1;
  padding: 0 5px 0 12px;

  input {
    flex: 1;
  }
`

const Workspace = styled.main`
  display: flex;
  flex: 1;
  min-height: 0;
`

const Sheet = styled.div`
  position: relative;
  flex: 1;
  overflow: hidden;
  background: #fff;
  border-right: 1px solid #d9d9d9;
  border-bottom: 1px solid #d9d9d9;
`

const Grid = styled.table`
  width: 100%;
  table-layout: fixed;
  border-collapse: separate;
  border-spacing: 0;
  font-family: Lato, sans-serif;
  font-variant-ligatures: none;
  font-weight: 700;
  font-size: 17px;
  color: #000;

  td, th {
    padding: 0;
  }
`

const Col = styled.col`
  width: ${(p) => p.$width}px;
`

const headCell = css`
  background: ${(p) => (p.$active ? '#dfdfdf' : '#efefef')};
  color: ${(p) => (p.$active ? '#1e7145' : '#444')};
  font-family: 'Open Sans', sans-serif;
  font-weight: 400;
  text-align: center;
`

const Corner = styled.td`
  background: #efefef;
  border-right: 1px solid #cfcfcf;
  border-bottom: 1px solid #9b9b9b;
  text-align: right;
  line-height: 0;
`

const ColHead = styled.th`
  ${headCell}
  height: 25px;
  border-right: 1px solid #d4d4d4;
  border-bottom: 1px solid #9b9b9b;
  font-size: 15px;
`

const RowHead = styled.th`
  ${headCell}
  border-right: 1px solid #9b9b9b;
  border-bottom: 1px solid #dcdcdc;
  font-size: 16px;
`

const Row = styled.tr`
  height: ${(p) => (p.$title ? 28 : 24)}px;
  line-height: 20px;
`

const Cell = styled.td`
  position: relative;
  text-align: ${(p) => (p.$right ? 'right' : 'left')};

  && {
    padding: 0 4px;
  }

  ${(p) => p.$head && css`
    background: #dce6f1;
    border-bottom: 1px solid #95b3d7;
  `}

  ${(p) => p.$lined && css`
    border-bottom: 1px solid #95b3d7;
  `}

  ${(p) => p.$selected && css`
    font-size: 21px;

    &::before {
      content: '';
      position: absolute;
      inset: -2px -1px -1px -1px;
      border: 2px solid #1e7145;
    }

    &::after {
      content: '';
      position: absolute;
      right: -3px;
      bottom: -3px;
      width: 6px;
      height: 6px;
      background: #1e7145;
      border: 1px solid #fff;
      border-width: 1px 0 0 1px;
    }
  `}
`

const CellSplit = styled.span`
  display: flex;
  align-items: center;
  justify-content: space-between;
  margin-right: -3px;
`

const FilterButton = styled.button`
  display: flex;
  align-items: center;
  justify-content: center;
  width: 21px;
  height: 21px;
  border: 1px solid #a6a6a6;
  background: #fbfbfb;
`

const CityName = styled.span`
  display: flex;
  align-items: center;
  gap: 3px;
  padding-left: 4px;
`

const Expand = styled.button`
  display: flex;
  align-items: center;
  justify-content: center;
  width: 11px;
  height: 11px;
  border: 1px solid #8ea6c4;
  border-radius: 2px;
  background: #eef2f8;
`

const Chart = styled.svg`
  position: absolute;
  left: 708px;
  top: 146px;
  width: 392px;
  height: 392px;

  path {
    stroke: #fff;
    stroke-width: 2;
    stroke-linejoin: round;
  }
`

const ChartLabel = styled.text`
  font-family: Lato, sans-serif;
  text-anchor: middle;
  fill: #fff;
  fill-opacity: 0.9;
`

const VScroll = styled.div`
  display: flex;
  flex-direction: column;
  align-items: center;
  width: 25px;
  padding: 6px 0 3px;
`

const VRail = styled.div`
  flex: 1;
  width: 100%;
  padding: 4px 0;
`

const VThumb = styled.div`
  width: 11px;
  height: 83%;
  margin: 0 auto;
  border-radius: 6px;
  background: #6e6e6e;
`

const SheetBar = styled.div`
  display: flex;
  align-items: center;
  height: 40px;
  padding-right: 23px;
`

const TabNav = styled.div`
  display: flex;
  gap: 32px;
  width: 136px;
  padding-left: 32px;
`

const SheetTab = styled.button`
  align-self: flex-start;
  height: 35px;
  padding: 4px 15px 0 16px;
  font-size: 17px;

  ${(p) => (p.$active ? css`
    margin: 0 5px;
    padding: 0 10px;
    border-radius: 0 0 6px 6px;
    background: #fff;
    box-shadow: 0 1px 2px rgba(0, 0, 0, 0.2);
    font-size: 16px;
    font-weight: 600;

    span {
      display: block;
      height: 28px;
      border-bottom: 2px solid #107c41;
      line-height: 25px;
    }
  ` : css`
    background: linear-gradient(#cfcfcf, #cfcfcf) right 8px / 1px 24px no-repeat;
  `)}
`

const AddSheet = styled.button`
  display: flex;
  margin-left: 54px;
`

const HScroll = styled.div`
  display: flex;
  align-items: center;
  width: 721px;
  height: 21px;
  margin-left: 7px;
  padding: 0 5px;
  border-radius: 11px;
  background: #f5f5f5;
`

const HRail = styled.div`
  flex: 1;
  padding: 0 6px;
`

const HThumb = styled.div`
  width: 96%;
  height: 11px;
  border-radius: 6px;
  background: #6e6e6e;
`

const StatusBar = styled.footer`
  display: flex;
  align-items: center;
  height: 25px;
  padding: 0 11px 0 14px;
  border-top: 1px solid #fff;
  background: #f4f4f4;
  font-size: 12px;
`

const Access = styled.button`
  display: flex;
  align-items: center;
  gap: 3px;
  margin-left: 25px;
  font-weight: 700;
`

const ViewButton = styled.button`
  display: flex;
  align-items: center;
  justify-content: center;
  width: 50px;
  height: 24px;
  background: ${(p) => (p.$active ? '#dedede' : 'none')};
`

const ZoomBox = styled.div`
  display: flex;
  align-items: center;
  gap: 5px;
  margin-left: 5px;

  input {
    appearance: none;
    width: 125px;
    height: 14px;
    background:
      linear-gradient(#666, #666) center / 1px 8px no-repeat,
      linear-gradient(#666, #666) center / 100% 1px no-repeat;
  }

  input::-webkit-slider-thumb {
    appearance: none;
    width: 6px;
    height: 14px;
    background: #5c5c5c;
  }
`

const Percent = styled.output`
  width: 40px;
  text-align: right;
`

const Watermark = styled.div`
  position: absolute;
  left: 0;
  right: 0;
  bottom: 20px;
  display: flex;
  flex-direction: column;
  align-items: center;
  color: #000;
  opacity: 0.09;
  font: 700 38px/40px 'Liberation Sans', sans-serif;
  pointer-events: none;
`

const Arabic = styled.span`
  font: 700 65px/68px 'DejaVu Sans', sans-serif;
`

export default App
